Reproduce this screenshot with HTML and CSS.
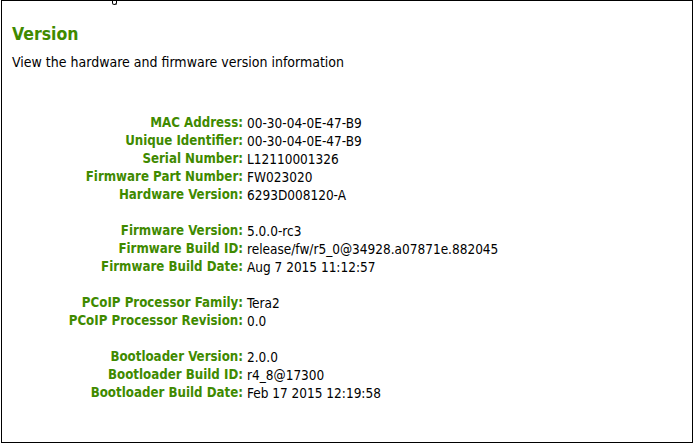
FILE: index.html
```html
<!DOCTYPE html>
<html>
<head>
  <meta charset="UTF-8">
  <title>Version</title>
  <link rel="stylesheet" href="styles.css">
</head>
<body>
  <div class="frame">
    <span class="mark"></span>
    <h1>Version</h1>
    <p class="intro">View the hardware and firmware version information</p>

    <div class="info">
      <div class="label">MAC Address:</div><div class="value">00-30-04-0E-47-B9</div>
      <div class="label">Unique Identifier:</div><div class="value">00-30-04-0E-47-B9</div>
      <div class="label">Serial Number:</div><div class="value">L12110001326</div>
      <div class="label">Firmware Part Number:</div><div class="value">FW023020</div>
      <div class="label">Hardware Version:</div><div class="value">6293D008120-A</div>
      <div class="spacer"></div>

      <div class="label">Firmware Version:</div><div class="value">5.0.0-rc3</div>
      <div class="label">Firmware Build ID:</div><div class="value">release/fw/r5_0@34928.a07871e.882045</div>
      <div class="label">Firmware Build Date:</div><div class="value">Aug 7 2015 11:12:57</div>
      <div class="spacer"></div>

      <div class="label">PCoIP Processor Family:</div><div class="value">Tera2</div>
      <div class="label">PCoIP Processor Revision:</div><div class="value">0.0</div>
      <div class="spacer"></div>

      <div class="label">Bootloader Version:</div><div class="value">2.0.0</div>
      <div class="label">Bootloader Build ID:</div><div class="value">r4_8@17300</div>
      <div class="label">Bootloader Build Date:</div><div class="value">Feb 17 2015 12:19:58</div>
    </div>
  </div>
</body>
</html>
```

FILE: styles.css
```css
body {
  margin: 0;
  font-family: "DejaVu Sans Condensed", "DejaVu Sans", sans-serif;
  font-stretch: condensed;
  font-size: 13.5px;
  color: #000;
  background: #fff;
}
.frame {
  position: relative;
  box-sizing: border-box;
  width: 692px;
  height: 443px;
  margin-left: 1px;
  border: 1px solid #000;
  padding: 22px 10px 0 10px;
}
.mark {
  position: absolute;
  left: 110px;
  top: 0;
  width: 3px;
  height: 3px;
  border: 1px solid #000;
  border-top: none;
  border-radius: 0 0 3px 3px;
}
h1 {
  margin: 0;
  font-size: 17.5px;
  line-height: 22px;
  font-weight: bold;
  color: #3f8a00;
}
.intro {
  margin: 9px 0 0 0;
  font-size: 14px;
  line-height: 16px;
}
.info {
  display: grid;
  grid-template-columns: 231px auto;
  column-gap: 4px;
  margin-top: 44px;
  line-height: 18px;
}
.label {
  text-align: right;
  font-size: 13.2px;
  font-weight: bold;
  color: #3f8a00;
}
.spacer {
  grid-column: 1 / 3;
  height: 18px;
}
```
